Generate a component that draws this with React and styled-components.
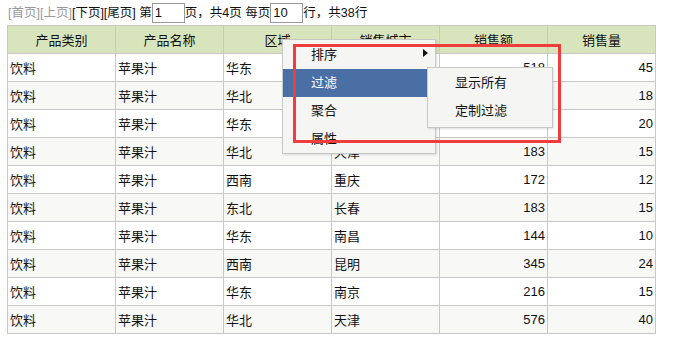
import React from "react";
import styled, { createGlobalStyle } from "styled-components";

const Global = createGlobalStyle`
  body {
    margin: 0;
    background: #fff;
    font-family: "Liberation Sans", "Noto Sans CJK SC", sans-serif;
    font-size: 13px;
    color: #111;
  }
`;

const Page = styled.div`
  position: relative;
  padding: 2px 0 0 7px;
  width: 649px;
`;

const Pager = styled.div`
  display: flex;
  align-items: center;
  height: 21px;
  line-height: 20px;
  font-size: 12.5px;
  white-space: pre;
  padding-left: 1px;
`;

const PageLink = styled.span`
  color: ${(p) => (p.disabled ? "#999" : "#111")};
`;

const PageInput = styled.input`
  box-sizing: border-box;
  width: 33px;
  height: 20px;
  border: 1px solid #999;
  padding: 0 2px;
  font: inherit;
  font-size: 13px;
  color: #111;
  margin: 0;
`;

const Table = styled.table`
  border-collapse: collapse;
  table-layout: fixed;
  width: 649px;
  margin-top: 2px;
`;

const Th = styled.th`
  height: 27px;
  border: 1px solid #c8c8c8;
  background: #d8e4bc;
  font-weight: normal;
  text-align: center;
  padding: 0;
`;

const Tr = styled.tr`
  background: ${(p) => (p.alt ? "#f8f8f6" : "#fff")};
`;

const Td = styled.td`
  height: 27px;
  border: 1px solid #c8c8c8;
  padding: 0 ${(p) => (p.num ? "2px" : "0")} 0 2px;
  text-align: ${(p) => (p.num ? "right" : "left")};
  white-space: nowrap;
`;

const Menu = styled.div`
  position: absolute;
  left: 282px;
  top: 39px;
  width: 152px;
  padding: 1px 0 0;
  background: #f5f5f3;
  border: 1px solid #c8c8c8;
  box-shadow: 1px 1px 2px rgba(0, 0, 0, 0.12);
`;

const MenuItem = styled.div`
  position: relative;
  height: 28px;
  line-height: 28px;
  padding-left: 28px;
  margin-right: 8px;
  color: ${(p) => (p.active ? "#fff" : "#111")};
  background: ${(p) => (p.active ? "#4a6fa5" : "transparent")};
`;

const Arrow = styled.span`
  position: absolute;
  right: -1px;
  top: 8px;
  width: 0;
  height: 0;
  border-top: 4px solid transparent;
  border-bottom: 4px solid transparent;
  border-left: 5px solid #111;
`;

const SubMenu = styled.div`
  position: absolute;
  left: 427px;
  top: 67px;
  width: 124px;
  padding: 1px 0 2px;
  background: #f5f5f3;
  border: 1px solid #c8c8c8;
  box-shadow: 1px 1px 2px rgba(0, 0, 0, 0.12);
`;

const SubItem = styled.div`
  height: 28px;
  line-height: 28px;
  padding-left: 27px;
`;

const Highlight = styled.div`
  position: absolute;
  left: 293px;
  top: 44px;
  width: 262px;
  height: 93px;
  border: 3px solid #f03c3c;
  pointer-events: none;
`;

const rows = [
  ["饮料", "苹果汁", "华东", "上海", 518, 45],
  ["饮料", "苹果汁", "华北", "北京", 312, 18],
  ["饮料", "苹果汁", "华东", "杭州", 266, 20],
  ["饮料", "苹果汁", "华北", "天津", 183, 15],
  ["饮料", "苹果汁", "西南", "重庆", 172, 12],
  ["饮料", "苹果汁", "东北", "长春", 183, 15],
  ["饮料", "苹果汁", "华东", "南昌", 144, 10],
  ["饮料", "苹果汁", "西南", "昆明", 345, 24],
  ["饮料", "苹果汁", "华东", "南京", 216, 15],
  ["饮料", "苹果汁", "华北", "天津", 576, 40],
];

const headers = ["产品类别", "产品名称", "区域", "销售城市", "销售额", "销售量"];

export default function App() {
  return (
    <Page>
      <Global />
      <Pager>
        <PageLink disabled>[首页]</PageLink>
        <PageLink disabled>[上页]</PageLink>
        <PageLink>[下页]</PageLink>
        <PageLink>[尾页]</PageLink>
        <span> 第</span>
        <PageInput defaultValue="1" />
        <span>页，共4页 每页</span>
        <PageInput defaultValue="10" />
        <span>行，共38行</span>
      </Pager>
      <Table>
        <thead>
          <tr>
            {headers.map((h) => (
              <Th key={h}>{h}</Th>
            ))}
          </tr>
        </thead>
        <tbody>
          {rows.map((r, i) => (
            <Tr key={i} alt={i % 2 === 1}>
              <Td>{r[0]}</Td>
              <Td>{r[1]}</Td>
              <Td>{r[2]}</Td>
              <Td>{r[3]}</Td>
              <Td num>{r[4]}</Td>
              <Td num>{r[5]}</Td>
            </Tr>
          ))}
        </tbody>
      </Table>
      <Menu>
        <MenuItem>
          排序
          <Arrow />
        </MenuItem>
        <MenuItem active>过滤</MenuItem>
        <MenuItem>聚合</MenuItem>
        <MenuItem>属性</MenuItem>
      </Menu>
      <SubMenu>
        <SubItem>显示所有</SubItem>
        <SubItem>定制过滤</SubItem>
      </SubMenu>
      <Highlight />
    </Page>
  );
}
